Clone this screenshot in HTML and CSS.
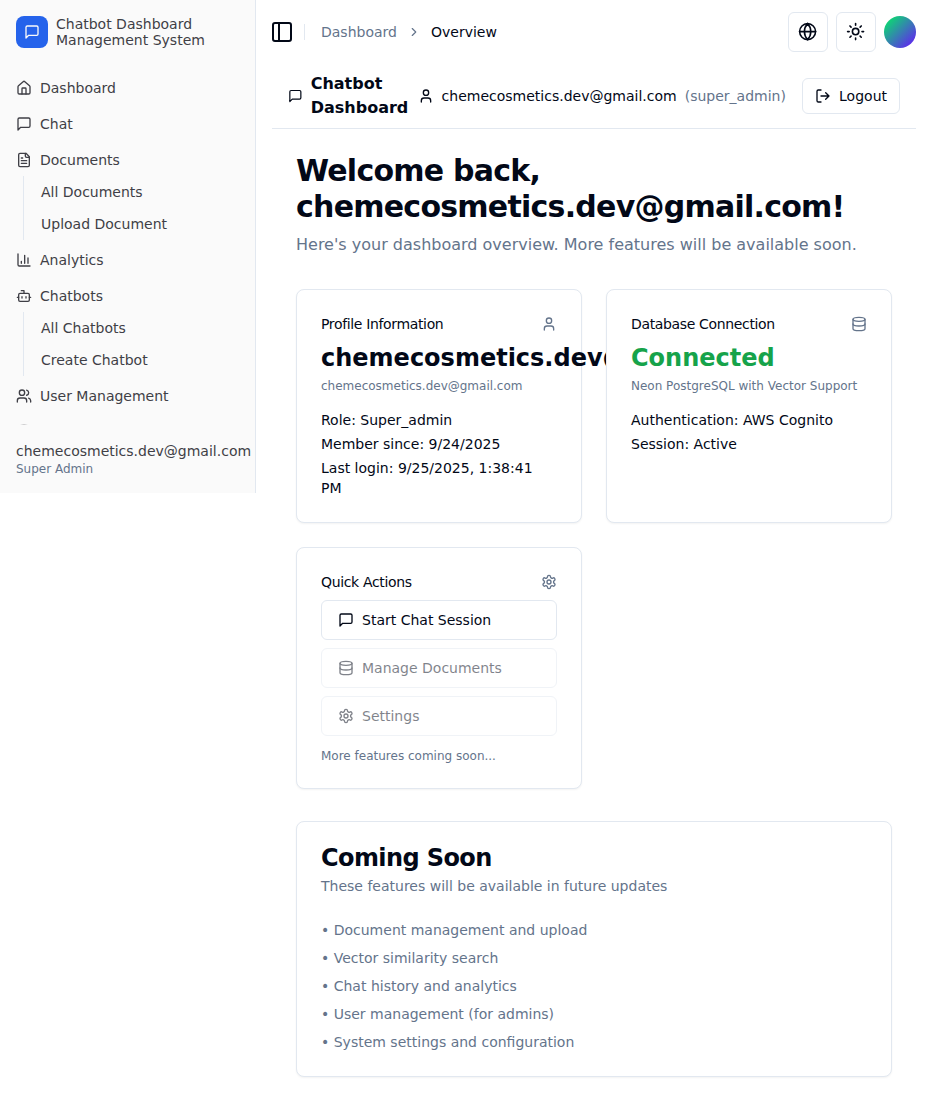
FILE: index.html
```html
<!DOCTYPE html>
<html lang="en">
<head>
<meta charset="utf-8">
<title>Chatbot Dashboard</title>
<link rel="stylesheet" href="styles.css">
</head>
<body>
<svg class="sprite" aria-hidden="true">
  <symbol id="message" viewBox="0 0 24 24"><path d="M21 15a2 2 0 0 1-2 2H7l-4 4V5a2 2 0 0 1 2-2h14a2 2 0 0 1 2 2z"/></symbol>
  <symbol id="house" viewBox="0 0 24 24"><path d="M15 21v-8a1 1 0 0 0-1-1h-4a1 1 0 0 0-1 1v8"/><path d="M3 10a2 2 0 0 1 .709-1.528l7-5.999a2 2 0 0 1 2.582 0l7 5.999A2 2 0 0 1 21 10v9a2 2 0 0 1-2 2H5a2 2 0 0 1-2-2z"/></symbol>
  <symbol id="file" viewBox="0 0 24 24"><path d="M15 2H6a2 2 0 0 0-2 2v16a2 2 0 0 0 2 2h12a2 2 0 0 0 2-2V7Z"/><path d="M14 2v4a2 2 0 0 0 2 2h4M10 9H8M16 13H8M16 17H8"/></symbol>
  <symbol id="chart" viewBox="0 0 24 24"><path d="M3 3v16a2 2 0 0 0 2 2h16M18 17V9M13 17V5M8 17v-3"/></symbol>
  <symbol id="bot" viewBox="0 0 24 24"><path d="M12 8V4H8"/><rect width="16" height="12" x="4" y="8" rx="2"/><path d="M2 14h2M20 14h2M15 13v2M9 13v2"/></symbol>
  <symbol id="users" viewBox="0 0 24 24"><path d="M16 21v-2a4 4 0 0 0-4-4H6a4 4 0 0 0-4 4v2"/><circle cx="9" cy="7" r="4"/><path d="M22 21v-2a4 4 0 0 0-3-3.87M16 3.13a4 4 0 0 1 0 7.75"/></symbol>
  <symbol id="user" viewBox="0 0 24 24"><path d="M19 21v-2a4 4 0 0 0-4-4H9a4 4 0 0 0-4 4v2"/><circle cx="12" cy="7" r="4"/></symbol>
  <symbol id="settings" viewBox="0 0 24 24"><path d="M12.22 2h-.44a2 2 0 0 0-2 2v.18a2 2 0 0 1-1 1.73l-.43.25a2 2 0 0 1-2 0l-.15-.08a2 2 0 0 0-2.73.73l-.22.38a2 2 0 0 0 .73 2.73l.15.1a2 2 0 0 1 1 1.72v.51a2 2 0 0 1-1 1.74l-.15.09a2 2 0 0 0-.73 2.73l.22.38a2 2 0 0 0 2.73.73l.15-.08a2 2 0 0 1 2 0l.43.25a2 2 0 0 1 1 1.73V20a2 2 0 0 0 2 2h.44a2 2 0 0 0 2-2v-.18a2 2 0 0 1 1-1.73l.43-.25a2 2 0 0 1 2 0l.15.08a2 2 0 0 0 2.73-.73l.22-.39a2 2 0 0 0-.73-2.73l-.15-.08a2 2 0 0 1-1-1.74v-.5a2 2 0 0 1 1-1.74l.15-.09a2 2 0 0 0 .73-2.73l-.22-.38a2 2 0 0 0-2.73-.73l-.15.08a2 2 0 0 1-2 0l-.43-.25a2 2 0 0 1-1-1.73V4a2 2 0 0 0-2-2z"/><circle cx="12" cy="12" r="3"/></symbol>
  <symbol id="database" viewBox="0 0 24 24"><ellipse cx="12" cy="5" rx="9" ry="3"/><path d="M3 5v14a9 3 0 0 0 18 0V5"/><path d="M3 12a9 3 0 0 0 18 0"/></symbol>
  <symbol id="panel" viewBox="0 0 24 24"><rect width="18" height="18" x="3" y="3" rx="2"/><path d="M9 3v18"/></symbol>
  <symbol id="chevron" viewBox="0 0 24 24"><path d="m9 18 6-6-6-6"/></symbol>
  <symbol id="globe" viewBox="0 0 24 24"><circle cx="12" cy="12" r="10"/><path d="M12 2a14.5 14.5 0 0 0 0 20 14.5 14.5 0 0 0 0-20M2 12h20"/></symbol>
  <symbol id="sun" viewBox="0 0 24 24"><circle cx="12" cy="12" r="4"/><path d="M12 2v2M12 20v2M4.93 4.93l1.41 1.41M17.66 17.66l1.41 1.41M2 12h2M20 12h2M6.34 17.66l-1.41 1.41M19.07 4.93l-1.41 1.41"/></symbol>
  <symbol id="logout" viewBox="0 0 24 24"><path d="m16 17 5-5-5-5M21 12H9M9 21H5a2 2 0 0 1-2-2V5a2 2 0 0 1 2-2h4"/></symbol>
</svg>
<div class="app">
  <aside class="sidebar">
    <div class="sidebar-content">
      <div class="brand">
        <div class="brand-logo"><svg class="icon"><use href="#message"/></svg></div>
        <div class="brand-name">Chatbot Dashboard<br>Management System</div>
      </div>
      <nav class="menu">
        <div class="menu-item"><svg class="icon"><use href="#house"/></svg>Dashboard</div>
        <div class="menu-item"><svg class="icon"><use href="#message"/></svg>Chat</div>
        <div>
          <div class="menu-item"><svg class="icon"><use href="#file"/></svg>Documents</div>
          <div class="submenu"><div>All Documents</div><div>Upload Document</div></div>
        </div>
        <div class="menu-item"><svg class="icon"><use href="#chart"/></svg>Analytics</div>
        <div>
          <div class="menu-item"><svg class="icon"><use href="#bot"/></svg>Chatbots</div>
          <div class="submenu"><div>All Chatbots</div><div>Create Chatbot</div></div>
        </div>
        <div class="menu-item"><svg class="icon"><use href="#users"/></svg>User Management</div>
        <div class="menu-item"><svg class="icon"><use href="#database"/></svg></div>
      </nav>
    </div>
    <div class="sidebar-footer">
      <div class="account">chemecosmetics.dev@gmail.com</div>
      <div class="account-role">Super Admin</div>
    </div>
  </aside>
  <main class="main">
    <header class="topbar">
      <svg class="icon panel-toggle"><use href="#panel"/></svg>
      <span class="separator"></span>
      <div class="crumbs"><span class="muted">Dashboard</span><svg class="icon chevron"><use href="#chevron"/></svg><span>Overview</span></div>
      <div class="tools">
        <button class="icon-button"><svg class="icon"><use href="#globe"/></svg></button>
        <button class="icon-button"><svg class="icon"><use href="#sun"/></svg></button>
        <span class="avatar"></span>
      </div>
    </header>
    <div class="userbar">
      <div class="app-title"><svg class="icon title-icon"><use href="#message"/></svg><span>Chatbot Dashboard</span></div>
      <div class="user"><svg class="icon"><use href="#user"/></svg><span>chemecosmetics.dev@gmail.com</span><span class="muted">(super_admin)</span></div>
      <button class="logout"><svg class="icon"><use href="#logout"/></svg>Logout</button>
    </div>
    <div class="content">
      <h1>Welcome back, chemecosmetics.dev@gmail.com!</h1>
      <p class="lead">Here's your dashboard overview. More features will be available soon.</p>
      <div class="cards">
        <section class="card">
          <div class="card-head"><h3>Profile Information</h3><svg class="icon"><use href="#user"/></svg></div>
          <div class="value">chemecosmetics.dev@gmail.com</div>
          <p class="note">chemecosmetics.dev@gmail.com</p>
          <div class="facts"><div>Role: Super_admin</div><div>Member since: 9/24/2025</div><div>Last login: 9/25/2025, 1:38:41 PM</div></div>
        </section>
        <section class="card">
          <div class="card-head"><h3>Database Connection</h3><svg class="icon"><use href="#database"/></svg></div>
          <div class="value value-ok">Connected</div>
          <p class="note">Neon PostgreSQL with Vector Support</p>
          <div class="facts"><div>Authentication: AWS Cognito</div><div>Session: Active</div></div>
        </section>
        <section class="card">
          <div class="card-head"><h3>Quick Actions</h3><svg class="icon"><use href="#settings"/></svg></div>
          <div class="actions">
            <button class="action"><svg class="icon"><use href="#message"/></svg>Start Chat Session</button>
            <button class="action" disabled><svg class="icon"><use href="#database"/></svg>Manage Documents</button>
            <button class="action" disabled><svg class="icon"><use href="#settings"/></svg>Settings</button>
          </div>
          <p class="note actions-note">More features coming soon...</p>
        </section>
      </div>
      <section class="card upcoming">
        <h2>Coming Soon</h2>
        <p class="upcoming-lead">These features will be available in future updates</p>
        <div class="upcoming-list">
          <div>• Document management and upload</div>
          <div>• Vector similarity search</div>
          <div>• Chat history and analytics</div>
          <div>• User management (for admins)</div>
          <div>• System settings and configuration</div>
        </div>
      </section>
    </div>
  </main>
</div>
</body>
</html>
```
FILE: styles.css
```css
* { box-sizing: border-box; margin: 0; padding: 0; }
body {
  font-family: "DejaVu Sans", sans-serif;
  font-size: 14px;
  line-height: 20px;
  color: #020817;
  background: #fff;
}
button { font: inherit; color: inherit; background: #fff; border: 1px solid #e2e8f0; border-radius: 6px; }
.sprite { display: none; }
.icon { width: 16px; height: 16px; flex-shrink: 0; fill: none; stroke: currentColor; stroke-width: 2; stroke-linecap: round; stroke-linejoin: round; }
.muted { color: #64748b; }
.app { display: flex; align-items: flex-start; }

.sidebar { width: 256px; height: 493px; flex-shrink: 0; display: flex; flex-direction: column; background: #fafafa; border-right: 1px solid #e2e8f0; color: #3f3f46; }
.sidebar-content { flex: 1; min-height: 0; overflow: hidden; }
.brand { display: flex; align-items: center; gap: 8px; padding: 16px; height: 64px; }
.brand-logo { width: 32px; height: 32px; border-radius: 8px; background: #2563eb; color: #fafafa; display: grid; place-items: center; }
.brand-name { line-height: 16px; }
.menu { display: flex; flex-direction: column; gap: 4px; padding: 8px; }
.menu-item { display: flex; align-items: center; gap: 8px; height: 32px; padding: 0 8px; }
.submenu { margin-left: 15px; border-left: 1px solid #e2e8f0; padding-left: 17px; line-height: 32px; }
.sidebar-footer { padding: 16px; height: 68px; white-space: nowrap; }
.account-role { font-size: 12px; line-height: 16px; color: #64748b; }

.main { flex: 1; min-width: 0; padding: 0 16px; }
.topbar { height: 64px; display: flex; align-items: center; }
.panel-toggle { width: 24px; height: 24px; margin-left: -2px; }
.separator { width: 1px; height: 16px; margin: 0 16px 0 10px; background: #e2e8f0; }
.crumbs { display: flex; align-items: center; gap: 10px; }
.chevron { width: 14px; height: 14px; color: #64748b; }
.tools { margin-left: auto; display: flex; align-items: center; gap: 8px; }
.icon-button { width: 40px; height: 40px; display: grid; place-items: center; }
.icon-button .icon { width: 19.2px; height: 19.2px; }
.avatar { width: 32px; height: 32px; border-radius: 50%; background: linear-gradient(135deg, #00f260 0%, #6a11ff 100%); }

.userbar { height: 65px; padding: 0 16px; display: flex; align-items: center; border-bottom: 1px solid #e2e8f0; }
.app-title { width: 129.6px; flex-shrink: 0; display: flex; align-items: center; gap: 8px; font-size: 16px; line-height: 24px; font-weight: 600; }
.title-icon { width: 14.7px; }
.user { display: flex; align-items: center; gap: 8px; white-space: nowrap; }
.logout { margin-left: auto; height: 36px; padding: 0 12px; display: flex; align-items: center; gap: 8px; }

.content { padding: 24px; }
h1 { font-size: 30px; line-height: 36px; letter-spacing: -0.75px; font-weight: 700; }
.lead { margin-top: 8px; font-size: 16px; line-height: 24px; color: #64748b; }
.cards { display: grid; grid-template-columns: 1fr 1fr; gap: 24px; margin: 32px 0; }
.card { min-width: 0; padding: 24px; border: 1px solid #e2e8f0; border-radius: 8px; background: #fff; box-shadow: 0 1px 2px rgba(0, 0, 0, .05); }
/* Later cards cover long values that run past the first card. */
.cards .card { position: relative; }
.card-head { display: flex; align-items: center; justify-content: space-between; margin-bottom: 8px; color: #64748b; }
.card-head h3 { font-size: 14px; font-weight: 500; letter-spacing: -0.35px; color: #020817; }
.value { font-size: 24px; line-height: 32px; font-weight: 700; }
.value-ok { color: #16a34a; }
.note { margin-top: 4px; font-size: 12px; line-height: 16px; color: #64748b; }
.facts { margin-top: 16px; display: grid; gap: 4px; }
.actions { display: grid; gap: 8px; }
.action { height: 40px; padding: 0 16px; display: flex; align-items: center; gap: 8px; }
.action:disabled { opacity: .5; }
.actions-note { margin-top: 12px; }
.upcoming h2 { font-size: 24px; line-height: 24px; font-weight: 600; letter-spacing: -0.6px; }
.upcoming-lead { margin-top: 6px; color: #64748b; }
.upcoming-list { margin-top: 24px; display: grid; gap: 8px; color: #64748b; }
```
